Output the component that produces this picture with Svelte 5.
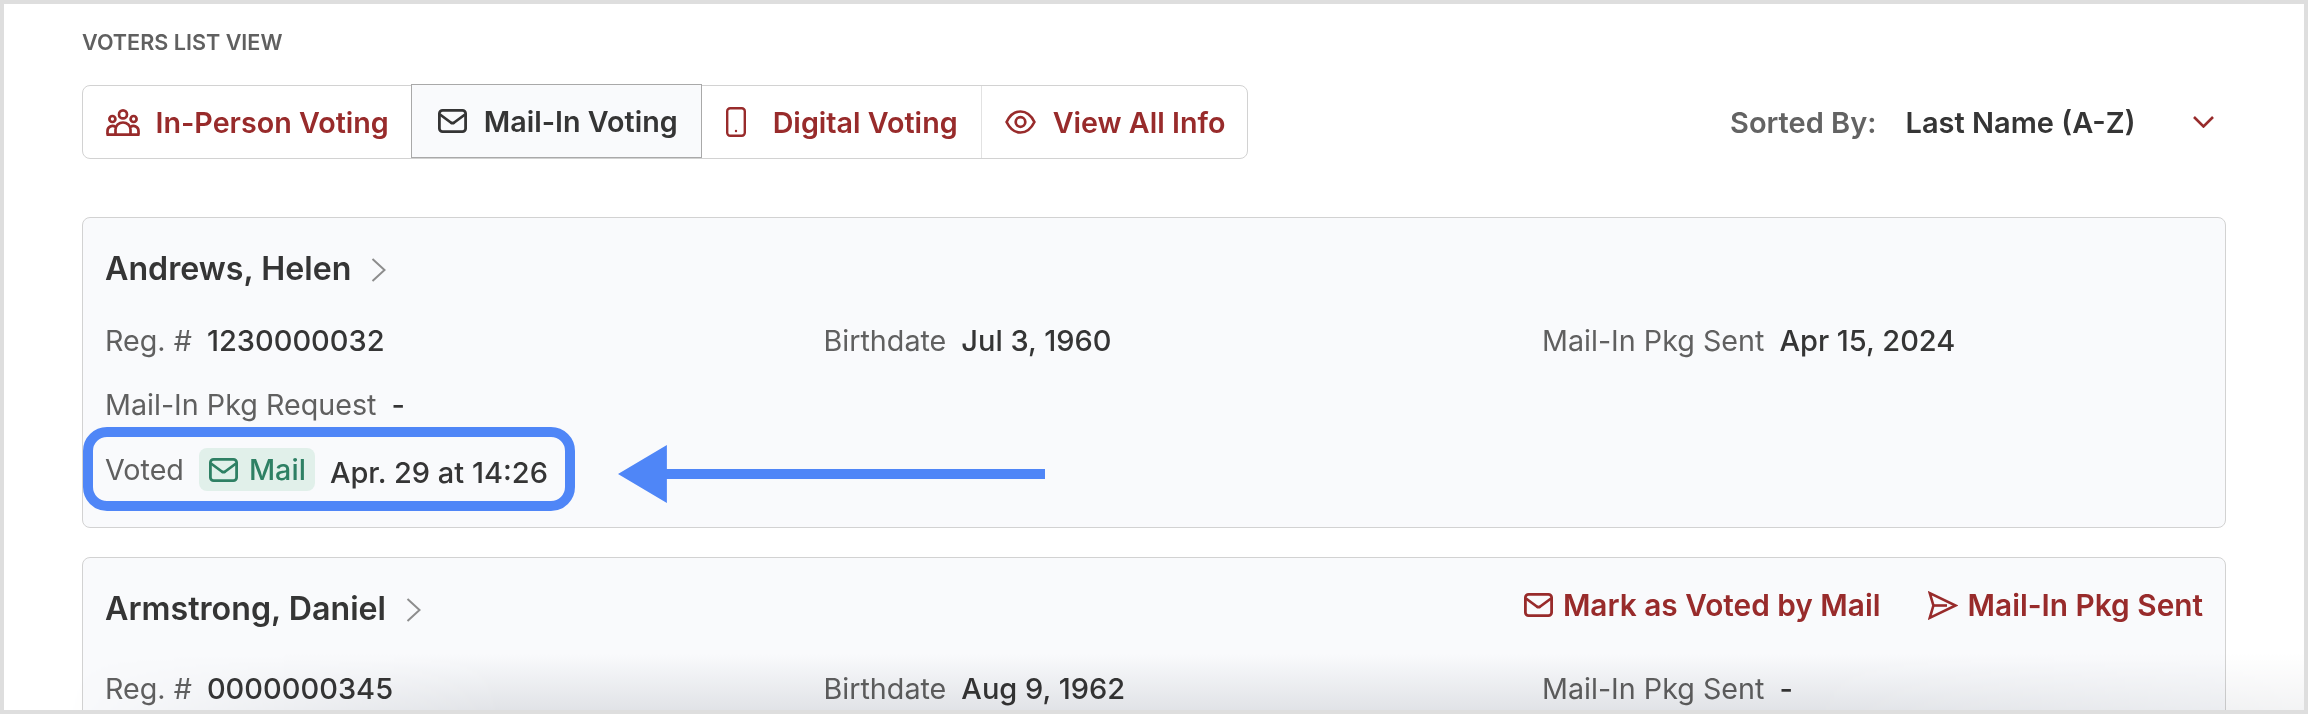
<script>
  const tabs = [
    { label: 'In-Person Voting', icon: 'people' },
    { label: 'Mail-In Voting', icon: 'mail', active: true },
    { label: 'Digital Voting', icon: 'phone' },
    { label: 'View All Info', icon: 'eye' }
  ];

  const voters = [
    { name: 'Andrews, Helen', reg: '1230000032', birth: 'Jul 3, 1960', sent: 'Apr 15, 2024', request: '-', voted: 'Apr. 29 at 14:26' },
    { name: 'Armstrong, Daniel', reg: '0000000345', birth: 'Aug 9, 1962', sent: '-', actions: true }
  ];
</script>

{#snippet icon(name)}
  {#if name === 'people'}
    <svg class="ic people" viewBox="0 0 34 27" fill="none" stroke="currentColor" stroke-width="2.7">
      <circle cx="17" cy="5.4" r="4" />
      <circle cx="6.4" cy="10" r="3" />
      <circle cx="27.6" cy="10" r="3" />
      <path d="M9.5 25.5v-5a7.5 7 0 0 1 15 0v5" />
      <path d="M1.5 25.5v-3.5a5 5 0 0 1 8-4M32.5 25.5v-3.5a5 5 0 0 0-8-4" />
      <path d="M0.5 25.6h33" />
    </svg>
  {:else if name === 'mail'}
    <svg class="ic mail" viewBox="0 0 29 24" fill="none" stroke="currentColor" stroke-width="2.8" stroke-linejoin="round">
      <rect x="1.4" y="1.4" width="26.2" height="21.2" rx="3.2" />
      <path d="M2 5.5l10.8 8a3 3 0 0 0 3.4 0L27 5.5" />
    </svg>
  {:else if name === 'phone'}
    <svg class="ic phone" viewBox="0 0 20 30" fill="none" stroke="currentColor" stroke-width="2.4">
      <rect x="1.2" y="1.2" width="17.6" height="27.6" rx="3" />
      <circle cx="10" cy="24" r="1.2" fill="currentColor" stroke="none" />
    </svg>
  {:else if name === 'eye'}
    <svg class="ic eye" viewBox="0 0 31 24" fill="none" stroke="currentColor" stroke-width="2.7">
      <path d="M1.6 12C5 5 10 1.5 15.5 1.5S26 5 29.4 12C26 19 21 22.5 15.5 22.5S5 19 1.6 12z" />
      <circle cx="15.5" cy="12" r="4.8" />
    </svg>
  {:else if name === 'send'}
    <svg class="ic send" viewBox="0 0 30 29" fill="none" stroke="currentColor" stroke-width="2.6" stroke-linejoin="miter">
      <path d="M1.8 2.2L27.5 14.5 1.8 26.8 5.4 14.5z" />
      <path d="M5.4 14.5H19" />
    </svg>
  {/if}
{/snippet}

<div class="frame">
  <div class="title">VOTERS LIST VIEW</div>

  <div class="toolbar">
    <div class="tabs">
      {#each tabs as tab}
        <button class="tab" class:active={tab.active}>
          {@render icon(tab.icon)}
          <span>{tab.label}</span>
        </button>
      {/each}
    </div>
    <div class="sort">
      <span class="sort-label">Sorted By:</span>
      <span class="sort-value">Last Name (A-Z)</span>
      <svg class="chev" viewBox="0 0 21 12" fill="none" stroke="currentColor" stroke-width="2.6"><path d="M1 1l9.5 9.5L20 1" /></svg>
    </div>
  </div>

  {#each voters as v}
    <div class="card">
      <div class="head" class:tall={v.actions}>
        <div class="name">
          {v.name}
          <svg class="go" viewBox="0 0 15 24" fill="none" stroke="currentColor" stroke-width="2"><path d="M1.5 1l12 11-12 11" /></svg>
        </div>
        {#if v.actions}
          <div class="actions">
            <span class="act">{@render icon('mail')}Mark as Voted by Mail</span>
            <span class="act">{@render icon('send')}Mail-In Pkg Sent</span>
          </div>
        {/if}
      </div>
      <div class="grid">
        <div class="cell"><span class="k">Reg. #</span><b>{v.reg}</b></div>
        <div class="cell"><span class="k">Birthdate</span><b>{v.birth}</b></div>
        <div class="cell"><span class="k">Mail-In Pkg Sent</span><b>{v.sent}</b></div>
        {#if v.request}
          <div class="cell wide"><span class="k">Mail-In Pkg Request</span><b>{v.request}</b></div>
        {/if}
        {#if v.voted}
          <div class="cell wide voted">
            <span class="k">Voted</span>
            <span class="pill">{@render icon('mail')}Mail</span>
            <b>{v.voted}</b>
            <!-- annotation drawn over the row -->
            <div class="hilite"></div>
            <svg class="arrow" viewBox="0 0 428 58" fill="#4f86f7"><path d="M0 29L49 0v24h379v10H49v24z" /></svg>
          </div>
        {/if}
      </div>
    </div>
  {/each}

  <div class="fade"></div>
</div>

<style>
  :global(body) {
    margin: 0;
  }

  .frame {
    position: relative;
    box-sizing: border-box;
    width: 2308px;
    height: 714px;
    overflow: hidden;
    border: 4px solid #dedede;
    background: #fff;
    padding: 26px 78px 0 78px;
    font-family: Inter, "Noto Sans", sans-serif;
    color: #353535;
  }

  .title {
    font-size: 21.6px;
    line-height: 24px;
    font-weight: 600;
    color: #606060;
  }

  .toolbar {
    display: flex;
    justify-content: space-between;
    align-items: center;
    margin-top: 31px;
    height: 74px;
  }

  .tabs {
    display: flex;
    height: 74px;
    box-sizing: border-box;
    border: 1.5px solid #d2d2d2;
    border-radius: 8px;
  }

  .tab {
    display: flex;
    align-items: center;
    gap: 17px;
    padding: 0 23px;
    border: 0;
    background: none;
    font: inherit;
    font-size: 28.7px;
    font-weight: 600;
    color: #982b2b;
    white-space: nowrap;
  }

  .tab:first-child {
    gap: 16px;
    padding-left: 22.5px;
  }

  .tab:last-child {
    padding-right: 22px;
  }

  .tab + .tab {
    border-left: 1.5px solid #e2e2e2;
  }

  .tab.active {
    height: 74px;
    box-sizing: border-box;
    margin: -2px 0 0 -1px;
    padding: 0 23px 0 26px;
    background: #f9fafc;
    border: 1.5px solid #a9a9a9;
    color: #353535;
  }

  .tab.active + .tab {
    border-left: 0;
  }

  .ic {
    flex: none;
    display: block;
  }

  .people { width: 34px; height: 27px; }
  .mail { width: 29px; height: 24px; }
  .phone { width: 20px; height: 30px; margin: 0 10px 0 1px; }
  .eye { width: 31px; height: 24px; }
  .send { width: 30px; height: 29px; }

  .sort {
    display: flex;
    align-items: center;
    font-size: 29px;
    font-weight: 600;
    margin-right: 12px;
  }

  .sort-label {
    color: #636363;
  }

  .sort-value {
    margin-left: 29px;
    color: #353535;
  }

  .chev {
    width: 21px;
    height: 12px;
    margin-left: 57.5px;
    color: #982b2b;
  }

  .card {
    box-sizing: border-box;
    border: 1.5px solid #d2d2d2;
    border-radius: 8px;
    background: #f9fafc;
    padding: 24px 22px 27px;
    margin-top: 29px;
  }

  .toolbar + .card {
    margin-top: 58px;
  }

  .head {
    display: flex;
    justify-content: space-between;
    align-items: flex-start;
    height: 52px;
    margin-bottom: 14px;
  }

  .head.tall {
    height: 60px;
  }

  .name {
    display: flex;
    align-items: center;
    gap: 20px;
    height: 52px;
    font-size: 32.2px;
    font-weight: 600;
  }

  .go {
    width: 15px;
    height: 24px;
    color: #8d8d8d;
    margin-top: 4px;
  }

  .actions {
    display: flex;
    gap: 47px;
    height: 46px;
    align-items: center;
  }

  .act {
    display: flex;
    align-items: center;
    gap: 10px;
    font-size: 29.8px;
    font-weight: 600;
    color: #982b2b;
  }

  .grid {
    display: grid;
    grid-template-columns: 718.5px 718.5px 1fr;
    grid-auto-rows: 64px;
    width: 2097px;
  }

  .cell {
    display: flex;
    align-items: center;
    gap: 15px;
    font-size: 28.7px;
    white-space: nowrap;
  }

  .cell.wide {
    grid-column: 1 / -1;
  }

  .k {
    color: #606060;
  }

  .cell b {
    font-size: 29px;
    font-weight: 500;
    color: #353535;
  }

  .voted {
    position: relative;
    padding-top: 3px;
    box-sizing: border-box;
  }

  .voted b {
    margin-top: 6px;
  }

  .pill {
    display: flex;
    align-items: center;
    gap: 11px;
    height: 43px;
    padding: 0 9px 0 10px;
    border-radius: 8px;
    background: #e1f0ea;
    color: #2e8064;
    font-weight: 500;
  }

  .hilite {
    position: absolute;
    left: -22.5px;
    top: -9px;
    box-sizing: border-box;
    width: 492px;
    height: 84px;
    border: 10px solid #4f86f7;
    border-radius: 24px;
    pointer-events: none;
  }

  .arrow {
    position: absolute;
    left: 513px;
    top: 9px;
    width: 427px;
    height: 58px;
  }

  /* bottom fade tints the background only, text stays dark */
  .fade {
    position: absolute;
    left: 0;
    right: 0;
    bottom: 0;
    height: 56px;
    background: linear-gradient(#fff, #e7e8ea);
    mix-blend-mode: multiply;
    -webkit-mask-image: linear-gradient(to right, transparent 60px, #000 500px, #000 1800px, rgba(0, 0, 0, 0.5) 100%);
    mask-image: linear-gradient(to right, transparent 60px, #000 500px, #000 1800px, rgba(0, 0, 0, 0.5) 100%);
    pointer-events: none;
  }
</style>
